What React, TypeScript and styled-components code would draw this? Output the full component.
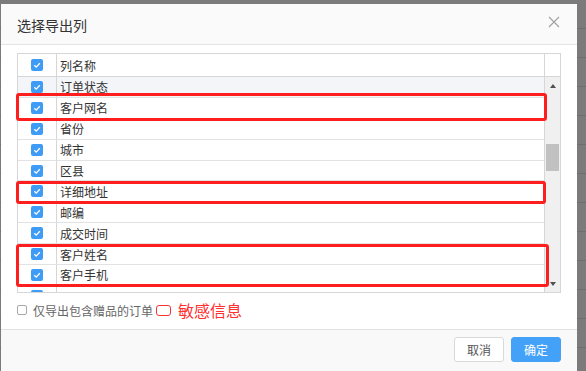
import { createGlobalStyle, styled } from "styled-components";

const GlobalStyle = createGlobalStyle`
    html, body {
        margin: 0;
        padding: 0;
    }
    body {
        font-family: "Noto Sans CJK SC", "Liberation Sans", sans-serif;
        background: #7b7b7b;
    }
`

// the last entry is scrolled almost out of view, only its checkbox peeks in
const columns = [
    "订单状态",
    "客户网名",
    "省份",
    "城市",
    "区县",
    "详细地址",
    "邮编",
    "成交时间",
    "客户姓名",
    "客户手机",
    "",
]

// red boxes somebody drew on the screenshot, in px from the table's corner
const marks = [
    { left: -2, top: 39, width: 531, height: 28 },
    { left: -2, top: 127, width: 530, height: 23 },
    { left: -2, top: 190, width: 533, height: 43 },
]

const Check = () => (
    <CheckBox>
        <svg width="12" height="12" viewBox="0 0 12 12">
            <polyline points="3.3,6.3 5.2,8.1 8.8,4.2" fill="none" stroke="#fff" strokeWidth="1.3" />
        </svg>
    </CheckBox>
)

const App = () => {
    return (
        <>
            <GlobalStyle />
            <Page>
                <Dialog>
                    <Header>
                        <Title>选择导出列</Title>
                        <Close>
                            <svg width="12" height="12" viewBox="0 0 12 12">
                                <path d="M1 1 L11 11 M11 1 L1 11" stroke="#a0a0a0" strokeWidth="1.1" />
                            </svg>
                        </Close>
                    </Header>
                    <Body>
                        <Table>
                            <HeadRow>
                                <CheckCell><Check /></CheckCell>
                                <NameCell>列名称</NameCell>
                                <CornerCell />
                            </HeadRow>
                            <BodyArea>
                                <Rows>
                                    {columns.map((c, i) => (
                                        <Row key={i} $hover={i === 0}>
                                            <CheckCell><Check /></CheckCell>
                                            <NameCell>{c}</NameCell>
                                        </Row>
                                    ))}
                                </Rows>
                                <Scrollbar>
                                    <Arrow $down={false} />
                                    <Track>
                                        <Thumb />
                                    </Track>
                                    <Arrow $down={true} />
                                </Scrollbar>
                            </BodyArea>
                            {marks.map((m, i) => (
                                <Mark key={i} style={m} />
                            ))}
                        </Table>
                        <Options>
                            <PlainBox />
                            <OptionLabel>仅导出包含赠品的订单</OptionLabel>
                            <RedBox />
                            <RedText>敏感信息</RedText>
                        </Options>
                    </Body>
                    <Footer>
                        <Button $primary={false}>取消</Button>
                        <Button $primary={true}>确定</Button>
                    </Footer>
                </Dialog>
            </Page>
        </>
    )
}

const Page = styled.div`
    position: relative;
    width: 586px;
    height: 371px;
    overflow: hidden;
    padding-top: 4px;
    box-sizing: border-box;
    background-color: #7b7b7b;
    background-image: repeating-linear-gradient(
        to bottom,
        transparent 0px,
        transparent 28px,
        #6e6e6e 28px,
        #6e6e6e 29px
    );
`

const Dialog = styled.div`
    position: relative;
    margin-left: 1px;
    width: 576px;
    height: 380px;
    background: #fff;
    display: flex;
    flex-direction: column;
`

const Header = styled.div`
    height: 40px;
    flex-shrink: 0;
    background: #fafafa;
    border-bottom: 1px solid #e4e4e4;
    display: flex;
    align-items: center;
    justify-content: space-between;
    padding: 0 17px 0 16px;
`

const Title = styled.h3`
    margin: 0;
    font-size: 14px;
    font-weight: normal;
    color: #333;
    line-height: 1;
    margin-top: 1px;
`

const Close = styled.div`
    width: 12px;
    height: 12px;
    display: flex;
    margin-top: -4px;
`

const Body = styled.div`
    padding: 8px 16px 9px 16px;
    background: #fff;
`

const Table = styled.div`
    position: relative;
    border: 1px solid #d6d6d6;
    font-size: 12px;
    color: #333;
`

const HeadRow = styled.div`
    display: flex;
    height: 23px;
    box-sizing: border-box;
    border-bottom: 1px solid #d6d6d6;
    background: #fff;
`

const CheckCell = styled.div`
    width: 39px;
    flex-shrink: 0;
    box-sizing: border-box;
    border-right: 1px solid #d6d6d6;
    display: flex;
    align-items: center;
    justify-content: center;
`

const NameCell = styled.div`
    flex: 1;
    padding-left: 3px;
    display: flex;
    align-items: center;
    white-space: nowrap;
`

const CornerCell = styled.div`
    width: 16px;
    box-sizing: border-box;
    border-left: 1px solid #d6d6d6;
`

const CheckBox = styled.span`
    width: 12px;
    height: 12px;
    border-radius: 2px;
    background: #3e9cf6;
    display: flex;
`

const BodyArea = styled.div`
    display: flex;
    height: 215px;
    overflow: hidden;
`

const Rows = styled.div`
    flex: 1;
`

const Row = styled.div<{ $hover: boolean }>`
    display: flex;
    height: 20.9px;
    box-sizing: border-box;
    border-bottom: 1px solid #e2e2e2;
    background: ${(p) => (p.$hover ? "#f4f5f9" : "#fff")};
`

const Scrollbar = styled.div`
    width: 16px;
    box-sizing: border-box;
    border-left: 1px solid #d6d6d6;
    background: #f0f0f0;
    display: flex;
    flex-direction: column;
    align-items: center;
`

const Arrow = styled.span<{ $down: boolean }>`
    width: 0;
    height: 0;
    margin: ${(p) => (p.$down ? "0 0 6px" : "7px 0 0")};
    border-left: 3.5px solid transparent;
    border-right: 3.5px solid transparent;
    ${(p) => (p.$down ? "border-top: 4px solid #505050;" : "border-bottom: 4px solid #505050;")}
`

const Track = styled.div`
    flex: 1;
    width: 100%;
    display: flex;
    justify-content: center;
    padding-top: 56px;
`

const Thumb = styled.div`
    width: 13px;
    height: 27px;
    background: #c1c1c1;
`

const Mark = styled.div`
    position: absolute;
    box-sizing: border-box;
    border: 3px solid #ff1e1e;
    border-radius: 3px;
    pointer-events: none;
`

const Options = styled.div`
    display: flex;
    align-items: center;
    height: 20px;
    margin-top: 7px;
`

const PlainBox = styled.span`
    width: 10px;
    height: 10px;
    box-sizing: border-box;
    border: 1px solid #a8a8a8;
    border-radius: 2px;
`

const OptionLabel = styled.span`
    margin-left: 6px;
    font-size: 12px;
    color: #666;
`

const RedBox = styled.span`
    margin-left: 3px;
    width: 15px;
    height: 11px;
    box-sizing: border-box;
    border: 1.5px solid #f53535;
    border-radius: 3px;
`

const RedText = styled.span`
    margin-left: 7px;
    font-size: 16px;
    color: #ff3030;
    line-height: 1;
`

const Footer = styled.div`
    flex: 1;
    border-top: 1px solid #e2e2e2;
    background: #f9f9f9;
    display: flex;
    justify-content: flex-end;
    align-items: flex-start;
    gap: 7px;
    padding: 7px 16px 0 0;
`

const Button = styled.button<{ $primary: boolean }>`
    width: 50px;
    height: 25px;
    box-sizing: border-box;
    padding: 0;
    border-radius: 3px;
    font-family: inherit;
    font-size: 12px;
    border: 1px solid ${(p) => (p.$primary ? "#43a1f8" : "#d9d9d9")};
    background: ${(p) => (p.$primary ? "#43a1f8" : "#fff")};
    color: ${(p) => (p.$primary ? "#fff" : "#555")};
`

export default App;
